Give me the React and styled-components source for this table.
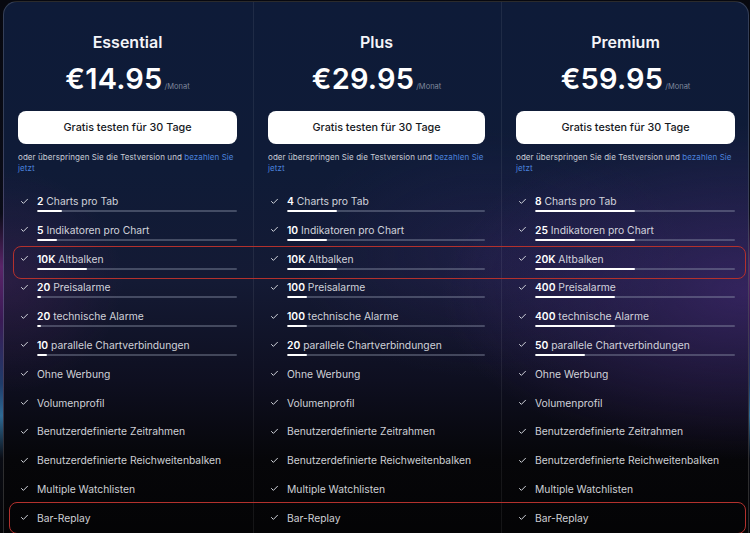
import React from "react";
import styled, { createGlobalStyle } from "styled-components";

const Global = createGlobalStyle`
  html, body {
    margin: 0;
    padding: 0;
    overflow: hidden;
    height: 533px;
  }
  body {
    font-family: Inter, "Noto Sans", "Liberation Sans", sans-serif;
    background:
      linear-gradient(180deg, #07080f 0%, #0a0c18 40%, #5a2468 50%, #3a1a55 60%, #1f3c6a 72%, #2e6a94 78%, #0a0c14 86%, #050507 100%);
    -webkit-font-smoothing: antialiased;
  }
`;

const Frame = styled.div`
  position: relative;
  box-sizing: border-box;
  margin: 1px 1px 0 3px;
  height: 560px;
  border: 1px solid rgba(255, 255, 255, 0.16);
  border-radius: 14px;
  overflow: hidden;
  background:
    radial-gradient(ellipse 55% 40% at 100% 52%, rgba(78, 44, 128, 0.55), rgba(78, 44, 128, 0) 75%),
    radial-gradient(ellipse 35% 30% at 65% 45%, rgba(60, 40, 110, 0.25), rgba(60, 40, 110, 0) 75%),
    radial-gradient(ellipse 20% 25% at 0% 50%, rgba(120, 40, 120, 0.22), rgba(120, 40, 120, 0) 80%),
    linear-gradient(180deg, #0e1b38 0%, #0f1b37 30%, #141a34 50%, #0e0f20 68%, #060609 82%, #030304 100%);
`;

const Grid = styled.div`
  display: grid;
  grid-template-columns: 249px 248px 1fr;
  height: 100%;
`;

const Column = styled.section`
  display: flex;
  flex-direction: column;
  padding: 30px ${(p) => (p.$last ? 13 : 16)}px 0 14px;
  border-left: ${(p) => (p.$first ? "none" : "1px solid rgba(255,255,255,0.07)")};
`;

const Title = styled.h2`
  margin: 0;
  font-size: 16px;
  line-height: 20px;
  font-weight: 600;
  color: #f4f5f8;
  text-align: center;
`;

const PriceRow = styled.div`
  margin-top: 9px;
  height: 36px;
  display: flex;
  justify-content: center;
  align-items: baseline;
`;

const Price = styled.span`
  font-size: 29px;
  line-height: 36px;
  font-weight: 600;
  color: #ffffff;
  letter-spacing: 0.2px;
`;

const Per = styled.span`
  margin-left: 2px;
  font-size: 7.5px;
  color: #7f889c;
`;

const TrialButton = styled.button`
  margin-top: 14px;
  height: 33px;
  width: 100%;
  border: none;
  border-radius: 8px;
  background: #ffffff;
  color: #16181d;
  font-family: inherit;
  font-size: 10.8px;
  font-weight: 500;
  cursor: pointer;
`;

const Note = styled.p`
  margin: 7.5px 0 0;
  font-size: 8px;
  line-height: 11px;
  letter-spacing: 0.08px;
  color: #c9cdd6;
`;

const Link = styled.a`
  color: #4a82dc;
  text-decoration: none;
`;

const List = styled.ul`
  list-style: none;
  margin: 20.5px 0 0;
  padding: 0;
`;

const Item = styled.li`
  height: 28.8px;
  display: grid;
  grid-template-columns: 19px 1fr;
  grid-template-rows: 14px auto;
  row-gap: 2px;
`;

const CheckBox = styled.span`
  display: flex;
  align-items: center;
  padding-left: 1.5px;
  color: #d6d9e0;
`;

const Label = styled.span`
  font-size: 10.3px;
  line-height: 14px;
  color: rgba(236, 238, 243, 0.88);
  white-space: nowrap;
`;

const Num = styled.b`
  font-weight: 600;
  color: #ffffff;
`;

const Track = styled.div`
  grid-column: 2;
  height: 2px;
  border-radius: 1px;
  background: rgba(150, 158, 180, 0.38);
  overflow: hidden;
`;

const Fill = styled.div`
  height: 100%;
  background: #ffffff;
  border-radius: 1px;
`;

const Highlight = styled.div`
  position: absolute;
  top: ${(p) => p.$top}px;
  left: ${(p) => p.$left}px;
  right: 2px;
  height: ${(p) => p.$h}px;
  border: 1px solid #b3312d;
  border-radius: 8px;
  pointer-events: none;
`;

const Check = () => (
  <svg width="9" height="9" viewBox="0 0 24 24" fill="none" stroke="currentColor" strokeWidth="2.6" strokeLinecap="round" strokeLinejoin="round">
    <path d="M20 6 9 17l-5-5" />
  </svg>
);

const common = [
  "Ohne Werbung",
  "Volumenprofil",
  "Benutzerdefinierte Zeitrahmen",
  "Benutzerdefinierte Reichweitenbalken",
  "Multiple Watchlisten",
  "Bar-Replay",
];

const plans = [
  {
    name: "Essential",
    price: "€14.95",
    limits: [
      ["2", "Charts pro Tab", 12.5],
      ["5", "Indikatoren pro Chart", 10],
      ["10K", "Altbalken", 25],
      ["20", "Preisalarme", 2],
      ["20", "technische Alarme", 2],
      ["10", "parallele Chartverbindungen", 5],
    ],
  },
  {
    name: "Plus",
    price: "€29.95",
    limits: [
      ["4", "Charts pro Tab", 25],
      ["10", "Indikatoren pro Chart", 20],
      ["10K", "Altbalken", 25],
      ["100", "Preisalarme", 10],
      ["100", "technische Alarme", 10],
      ["20", "parallele Chartverbindungen", 10],
    ],
  },
  {
    name: "Premium",
    price: "€59.95",
    limits: [
      ["8", "Charts pro Tab", 50],
      ["25", "Indikatoren pro Chart", 50],
      ["20K", "Altbalken", 50],
      ["400", "Preisalarme", 40],
      ["400", "technische Alarme", 40],
      ["50", "parallele Chartverbindungen", 25],
    ],
  },
];

function Plan({ plan, first, last }) {
  return (
    <Column $first={first} $last={last}>
      <Title>{plan.name}</Title>
      <PriceRow>
        <Price>{plan.price}</Price>
        <Per>/Monat</Per>
      </PriceRow>
      <TrialButton>Gratis testen für 30 Tage</TrialButton>
      <Note>
        oder überspringen Sie die Testversion und <Link href="#">bezahlen Sie jetzt</Link>
      </Note>
      <List>
        {plan.limits.map(([n, text, pct]) => (
          <Item key={text}>
            <CheckBox>
              <Check />
            </CheckBox>
            <Label>
              <Num>{n}</Num> {text}
            </Label>
            <Track>
              <Fill style={{ width: `${pct}%` }} />
            </Track>
          </Item>
        ))}
        {common.map((text) => (
          <Item key={text}>
            <CheckBox>
              <Check />
            </CheckBox>
            <Label>{text}</Label>
          </Item>
        ))}
      </List>
    </Column>
  );
}

export default function App() {
  return (
    <>
      <Global />
      <Frame>
        <Grid>
          {plans.map((p, i) => (
            <Plan key={p.name} plan={p} first={i === 0} last={i === plans.length - 1} />
          ))}
        </Grid>
        <Highlight $top={244} $left={9} $h={31} />
        <Highlight $top={500} $left={5} $h={30} />
      </Frame>
    </>
  );
}
